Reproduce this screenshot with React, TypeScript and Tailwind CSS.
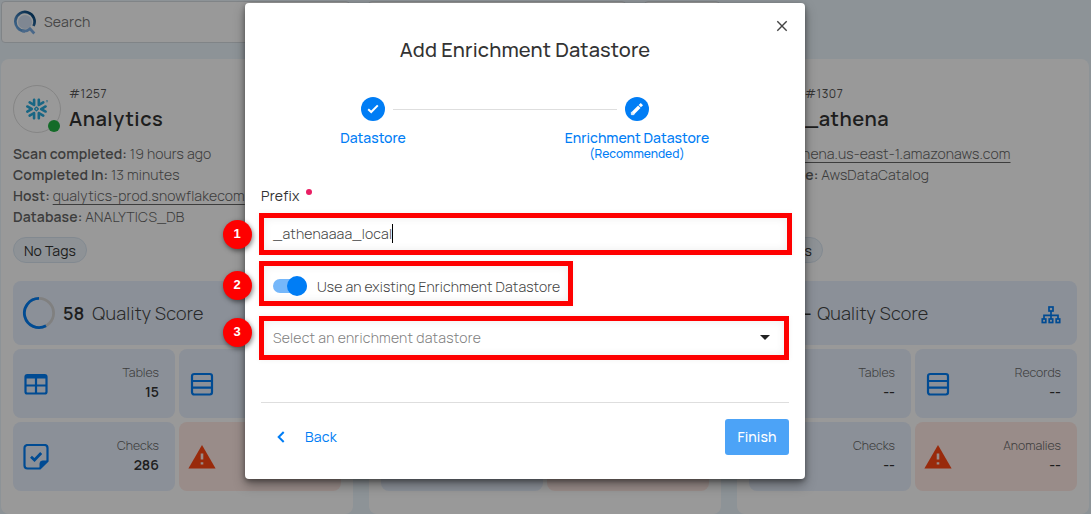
import type { ReactNode } from "react";
import { SiSnowflake } from "react-icons/si";

const BLUE = "#007df5";

function TableIcon() {
  return (
    <svg width="24" height="22" viewBox="0 0 24 22" fill="none" stroke={BLUE} strokeWidth="2">
      <rect x="1.500" y="2" width="21" height="18.500" rx="1.800" strokeWidth="2.200" />
      <path d="M1.500 3.800h21" strokeWidth="3.600" />
      <path d="M1.500 12.500h21M12 5v15" strokeWidth="2.200" />
    </svg>
  );
}

function RecordsIcon() {
  return (
    <svg width="24" height="24" viewBox="0 0 24 24" fill="none" stroke={BLUE} strokeWidth="2.200">
      <rect x="2" y="2" width="20" height="20.500" rx="2.200" />
      <path d="M2 9h20M2 15.600h20" />
    </svg>
  );
}

function ChecksIcon() {
  return (
    <svg width="26" height="26" viewBox="0 0 26 26" fill="none" stroke={BLUE} strokeWidth="2.200">
      <path d="M17 24.500H4.500a3 3 0 0 1-3-3V4a3 3 0 0 1 3-3h17a3 3 0 0 1 3 3v13z" />
      <path d="M17 24v-4.500a2.500 2.500 0 0 1 2.500-2.500h5z" fill={BLUE} strokeWidth="1" />
      <path d="M8 12.800l3.500 3.200 6.700-7" strokeWidth="2.800" />
    </svg>
  );
}

function AlertIcon() {
  return (
    <svg width="28" height="24" viewBox="0 0 28 24">
      <path d="M14 0L27.600 23.500H.4z" fill="#ff4613" />
      <path d="M14 8.500v6M14 17.300v2.300" stroke="#ffe9e4" strokeWidth="2.600" />
    </svg>
  );
}

function TreeIcon() {
  return (
    <svg width="20" height="18" viewBox="0 0 20 18" fill="none" stroke={BLUE} strokeWidth="1.700">
      <rect x="8" y="1" width="4" height="4" />
      <rect x="1.300" y="13" width="3.500" height="3.500" />
      <rect x="8.200" y="13" width="3.500" height="3.500" />
      <rect x="15.200" y="13" width="3.500" height="3.500" />
      <path d="M10 5v8M3 13V9.300h14V13" />
    </svg>
  );
}

function Logo() {
  return (
    <svg width="24" height="25" viewBox="0 0 24 25" fill="none">
      <defs>
        <linearGradient id="ring" x1="3" y1="20" x2="20" y2="4" gradientUnits="userSpaceOnUse">
          <stop stopColor="#70aeeb" />
          <stop offset="1" stopColor="#064478" />
        </linearGradient>
      </defs>
      <circle cx="12" cy="12" r="7" fill="#d4e2f3" />
      <path d="M20.500 16A9.600 9.600 0 1 0 12 21.200" stroke="url(#ring)" strokeWidth="2.700" />
      <path d="M9 20.900c4 .8 6.500-.6 8-2.100l4.300 4.700" stroke="#7caee4" strokeWidth="2.700" />
    </svg>
  );
}

function Tile({ icon, label, value, alert }: { icon: ReactNode; label?: string; value?: string; alert?: boolean }) {
  return (
    <div className={"flex h-[69px] items-center justify-between rounded-lg pl-[9px] pr-4 " + (alert ? "bg-[#ffe9e4]" : "bg-[#e8f0fd]")}>
      <div className="flex w-7 justify-center">{icon}</div>
      <div className="pb-[3px] text-right">
        <div className="text-[12.300px] font-light leading-[19px] text-[#666]">{label}</div>
        <div className="text-[14px] font-semibold leading-[19px] text-[#333]">{value}</div>
      </div>
    </div>
  );
}

type Store = {
  id: string;
  name: string;
  lines: { k: string; v: string; link?: boolean }[];
  score: string;
  tables?: string;
  checks?: string;
  records?: string;
  anomalies?: string;
};

const stores: Store[] = [
  {
    id: "#1257",
    name: "Analytics",
    lines: [
      { k: "Scan completed:", v: "19 hours ago" },
      { k: "Completed In:", v: "13 minutes" },
      { k: "Host:", v: "qualytics-prod.snowflakecom", link: true },
      { k: "Database:", v: "ANALYTICS_DB" },
    ],
    score: "58",
    tables: "15",
    checks: "286",
  },
  { id: "", name: "", lines: [], score: "" },
  {
    id: "#1307",
    name: "_athena",
    lines: [
      { k: "Host:", v: "athena.us-east-1.amazonaws.com", link: true },
      { k: "Database:", v: "AwsDataCatalog" },
    ],
    score: "--",
    tables: "--",
    checks: "--",
    records: "--",
    anomalies: "--",
  },
];

function StoreCard({ s }: { s: Store }) {
  return (
    <section className="flex h-[455px] w-[352px] shrink-0 flex-col overflow-hidden rounded-lg bg-white px-3 pt-[26px]">
      <div className="flex h-[48px] gap-2">
        <div className="relative flex size-12 shrink-0 items-center justify-center rounded-full border border-[#dedede]">
          <SiSnowflake size={22} color="#29abdc" />
          <span className="absolute right-0 bottom-0 size-3 rounded-full bg-[#22b344]" />
        </div>
        <div>
          <div className="h-[17px] text-[12px] leading-[17px] tracking-[0.5px] text-[#555]">{s.id}</div>
          <div className="-mt-px h-[35px] text-[20px] font-semibold leading-[36px] tracking-[0.500px] text-[#333]">{s.name}</div>
        </div>
      </div>
      <div className="mt-[10px] h-[85px]">
        {s.lines.map((l) => (
          <div key={l.k} className="h-[21px] whitespace-nowrap text-[14px] leading-[21px] text-[#666]">
            <b className="font-semibold tracking-[0.1px] text-[#666]">{l.k}</b>{" "}
            <span className={"font-light tracking-[0.140px] " + (l.link ? "underline underline-offset-[3px]" : "")}>{l.v}</span>
          </div>
        ))}
      </div>
      <div className="mt-[9px] flex h-[26px] w-[74px] shrink-0 items-center justify-center rounded-full border border-[#d9e5f1] bg-[#edf4fa] text-[14px] text-[#333]">
        {s.id && <span className="tracking-[0.1px]">No Tags</span>}
      </div>
      <div className="mt-[18px] flex h-16 shrink-0 items-center rounded-lg bg-[#e8f0fd] pl-[9px] pr-4 text-[18px]">
        <svg width="34" height="34" viewBox="0 0 34 34" fill="none" strokeWidth="2.800">
          <circle cx="17" cy="17" r="14.600" stroke="#d6d6d6" />
          {s.score === "58" && <path d="M17 2.400A14.600 14.600 0 1 0 24 29.800" stroke={BLUE} />}
        </svg>
        <span className={"ml-[7px] font-semibold text-[#333] " + (s.score === "--" ? "tracking-[-2.500px]" : "")}>{s.score}</span>
        {s.id && <span className="ml-[8px] font-light tracking-[0.250px] text-[#444]">Quality Score</span>}
        <span className="ml-auto mt-1">
          <TreeIcon />
        </span>
      </div>
      <div className="mt-1 grid grid-cols-2 gap-1">
        <Tile icon={<TableIcon />} label={s.tables && "Tables"} value={s.tables} />
        <Tile icon={<RecordsIcon />} label={s.records && "Records"} value={s.records} />
        <Tile icon={<ChecksIcon />} label={s.checks && "Checks"} value={s.checks} />
        <Tile icon={<AlertIcon />} label={s.anomalies && "Anomalies"} value={s.anomalies} alert />
      </div>
    </section>
  );
}

function Badge({ n, pos }: { n: string; pos: string }) {
  return (
    <div className={"absolute left-[222.500px] flex size-[29px] items-center justify-center rounded-full bg-[#fe0000] pb-0.5 font-['Liberation_Sans',sans-serif] text-[13px] font-bold text-white shadow-[1px_2px_5px_rgba(0,0,0,0.5)] " + pos}>
      {n}
    </div>
  );
}

function Modal() {
  return (
    <div className="absolute top-[3px] left-[245px] flex h-[476px] w-[560px] flex-col rounded bg-white px-4 shadow-[0_6px_12px_rgba(0,0,0,0.35),0_2px_5px_rgba(0,0,0,0.35)]">
      <div className="flex h-[31px] justify-end pt-[17px] pr-[1px]">
        <svg width="12" height="12" viewBox="0 0 12 12" stroke="#444" strokeWidth="1.400">
          <path d="M1.300 1.300l9.400 9.400M10.700 1.300l-9.400 9.400" />
        </svg>
      </div>
      <h1 className="h-8 whitespace-nowrap text-center text-[20px] font-medium leading-8 tracking-[0.140px] text-[#333]">Add Enrichment Datastore</h1>
      <div className="mt-[31px] flex h-6 items-center gap-2 pl-[100px]">
        <span className="flex size-6 shrink-0 items-center justify-center rounded-full bg-[#007df5]">
          <svg width="12" height="10" viewBox="0 0 12 10" fill="none" stroke="#fff" strokeWidth="2">
            <path d="M1.200 5.200l3 2.800 6.600-6.600" />
          </svg>
        </span>
        <span className="h-px w-[224px] bg-[#dedede]" />
        <span className="flex size-6 shrink-0 items-center justify-center rounded-full bg-[#007df5]">
          <svg width="14" height="14" viewBox="0 0 14 14" fill="none" stroke="#fff">
            <path d="M2.800 11.200L9.300 4.700" strokeWidth="3.400" />
            <path d="M1.300 9.900v2.800h2.800z" strokeWidth=".6" fill="#fff" strokeLinejoin="round" />
            <path d="M9.800 4.200L11.900 2.100" strokeWidth="3.200" />
          </svg>
        </span>
      </div>
      <div className="mt-[7px] flex h-[43px] text-center font-medium text-[#007df5]">
        <div className="ml-[52px] w-[120px] text-[14px] leading-[20px]">Datastore</div>
        <div className="ml-[124px] w-[160px] whitespace-nowrap">
          <div className="text-[14px] leading-[20px]">Enrichment Datastore</div>
          <div className="text-[12px] leading-[12px]">(Recommended)</div>
        </div>
      </div>
      <div className="mt-[13px] flex h-[24px] text-[14px] leading-[24px] tracking-[0.200px] text-[#333]">
        <span>Prefix</span>
        <span className="mt-[5px] ml-1.5 size-1.5 rounded-full bg-[#e91e63]" />
      </div>
      <div className="mt-[8px] flex h-[34px] items-center pl-3 text-[14px] font-light tracking-[0.190px] text-[#444]">
        <span>_athenaaaa_local</span>
        <span className="h-[19px] w-px bg-black" />
      </div>
      <div className="mt-[19px] flex h-[34px] items-center pl-3 text-[14px] text-[#444]">
        <span className="relative mr-[10px] flex h-[14px] w-[34px] items-center">
          <span className="h-[14px] w-[34px] rounded-full bg-[#75b7fa]" />
          <span className="absolute left-[14px] size-5 rounded-full bg-[#007df5]" />
        </span>
        <span className="whitespace-nowrap font-light tracking-[0.120px]">Use an existing Enrichment Datastore</span>
      </div>
      <div className="mt-[16px] flex h-[36px] items-center justify-between pl-3 pr-[19px] text-[14px] font-light tracking-[0.250px] text-[#808080]">
        <span>Select an enrichment datastore</span>
        <svg width="10" height="5" viewBox="0 0 10 5">
          <path d="M0 0h10L5 5z" fill="#222" />
        </svg>
      </div>
      <div className="mt-[47px] h-px shrink-0 bg-[#dedede]" />
      <div className="mt-4 flex h-9 shrink-0 items-center justify-between text-[14px] font-medium">
        <div className="flex items-center pl-4 font-normal text-[#007df5]">
          <svg width="8" height="12" viewBox="0 0 8 12" fill="none" stroke={BLUE} strokeWidth="2">
            <path d="M6.700 1L1.700 6l5 5" />
          </svg>
          <span className="ml-5 pb-0.5 tracking-[0.200px]">Back</span>
        </div>
        <button className="h-9 w-16 rounded-[3px] bg-[#4ca3f7] pb-0.5 tracking-[0.1px] text-white">Finish</button>
      </div>
    </div>
  );
}

export default function App() {
  return (
    <main className="relative h-[514px] w-[1091px] overflow-hidden bg-[#ecf5fc] font-['Manrope','Inter',sans-serif] [font-variant-ligatures:none]">
      <div className="flex h-[42px] gap-[18px] pt-px pl-px">
        <div className="flex h-[42px] w-[349px] items-center gap-[7px] rounded border border-[#d5dce2] bg-white pl-[11px] text-[14px] text-[#777]">
          <Logo />
          <span className="-mt-0.5 tracking-[0.200px]">Search</span>
        </div>
        <div className="h-[42px] w-[258px] rounded border border-[#d5dce2] bg-white" />
        <div className="h-[42px] w-[76px] rounded border border-[#d5dce2] bg-white" />
      </div>
      <div className="mt-[17px] flex gap-4 pl-px">
        {stores.map((s, i) => (
          <StoreCard key={i} s={s} />
        ))}
      </div>
      <div className="absolute inset-0 bg-black/40" />
      <Modal />
      <div className="absolute top-[213px] left-[259px] h-[42px] w-[533px] border-[5px] border-[#fe0000] shadow-[inset_0_0_8px_rgba(0,0,0,0.08),0_0_6px_rgba(0,0,0,0.05)]" />
      <div className="absolute top-[261px] left-[259px] h-[45px] w-[314px] border-[5px] border-[#fe0000] shadow-[inset_0_0_8px_rgba(0,0,0,0.08),0_0_6px_rgba(0,0,0,0.05)]" />
      <div className="absolute top-[316px] left-[259px] h-[44px] w-[530px] border-[5px] border-[#fe0000] shadow-[inset_0_0_8px_rgba(0,0,0,0.08),0_0_6px_rgba(0,0,0,0.05)]" />
      <Badge n="1" pos="top-[220px]" />
      <Badge n="2" pos="top-[271px]" />
      <Badge n="3" pos="top-[318px]" />
    </main>
  );
}
